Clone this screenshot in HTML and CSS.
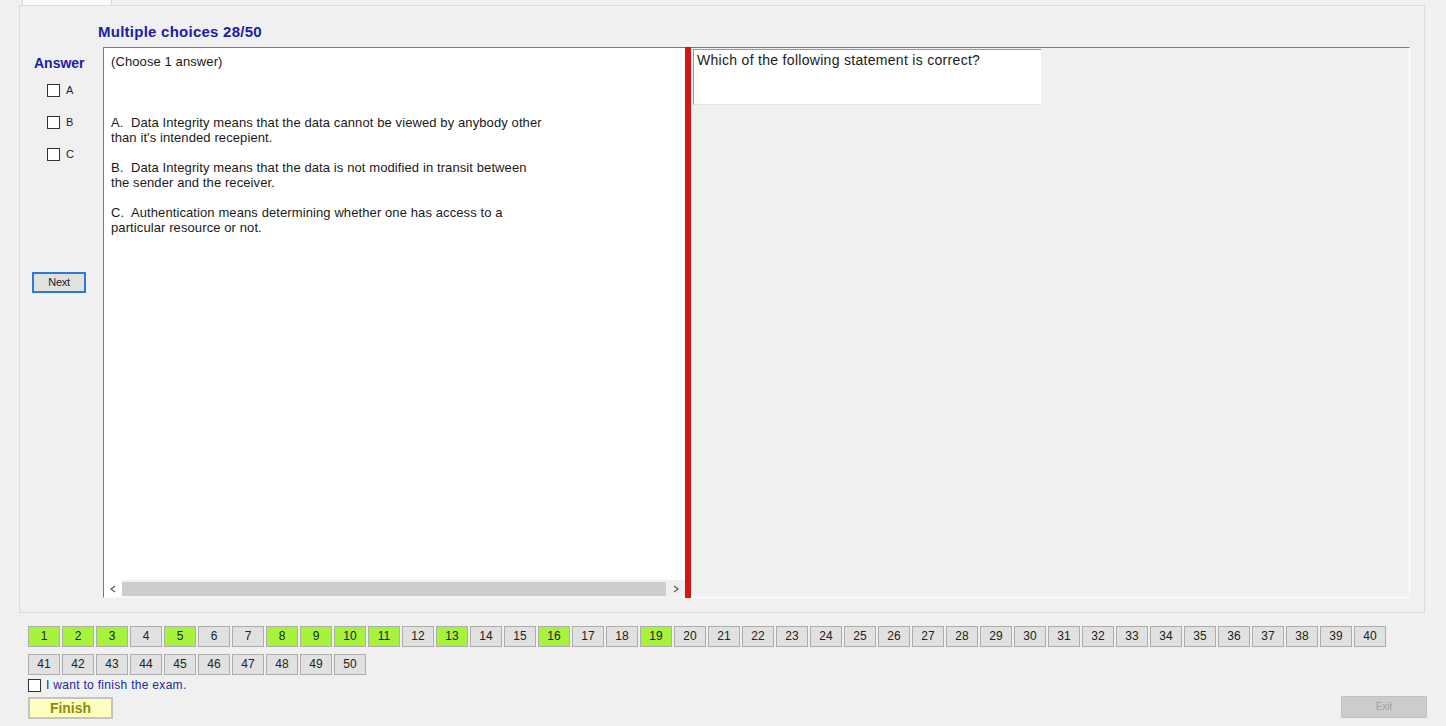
FILE: index.html
```html
<!DOCTYPE html>
<html>
<head>
<meta charset="utf-8">
<link rel="stylesheet" href="styles.css">
</head>
<body>
<div class="tabstrip"><div class="tab"></div></div>
<div class="tabpage">
  <div class="title">Multiple choices 28/50</div>
  <div class="main">
    <div class="answer">
      <div class="answer-label">Answer</div>
      <div class="opt"><span class="cb"></span><span>A</span></div>
      <div class="opt"><span class="cb"></span><span>B</span></div>
      <div class="opt"><span class="cb"></span><span>C</span></div>
      <div class="next">Next</div>
    </div>
    <div class="textbox">
      <div class="text">
        <p class="choose">(Choose 1 answer)</p>
        <p>A.&nbsp; Data Integrity means that the data cannot be viewed by anybody other<br>than it's intended recepient.</p>
        <p>B.&nbsp; Data Integrity means that the data is not modified in transit between<br>the sender and the receiver.</p>
        <p>C.&nbsp; Authentication means determining whether one has access to a<br>particular resource or not.</p>
      </div>
      <div class="hscroll">
        <span class="arrow"><svg width="8" height="8" viewBox="0 0 8 8"><polyline points="6,1 2,4 6,7" fill="none" stroke="#606060" stroke-width="1.3"/></svg></span>
        <span class="thumb"></span>
        <span class="arrow right"><svg width="8" height="8" viewBox="0 0 8 8"><polyline points="2,1 6,4 2,7" fill="none" stroke="#606060" stroke-width="1.3"/></svg></span>
      </div>
    </div>
    <div class="splitter"></div>
    <div class="rightpane">
      <div class="question">Which of the following statement is correct?</div>
    </div>
  </div>
</div>
<div class="nav">
  <span class="num done">1</span><span class="num done">2</span><span class="num done">3</span><span class="num">4</span><span class="num done">5</span><span class="num">6</span><span class="num">7</span><span class="num done">8</span><span class="num done">9</span><span class="num done">10</span>
  <span class="num done">11</span><span class="num">12</span><span class="num done">13</span><span class="num">14</span><span class="num">15</span><span class="num done">16</span><span class="num">17</span><span class="num">18</span><span class="num done">19</span><span class="num">20</span>
  <span class="num">21</span><span class="num">22</span><span class="num">23</span><span class="num">24</span><span class="num">25</span><span class="num">26</span><span class="num">27</span><span class="num">28</span><span class="num">29</span><span class="num">30</span>
  <span class="num">31</span><span class="num">32</span><span class="num">33</span><span class="num">34</span><span class="num">35</span><span class="num">36</span><span class="num">37</span><span class="num">38</span><span class="num">39</span><span class="num">40</span>
  <span class="num">41</span><span class="num">42</span><span class="num">43</span><span class="num">44</span><span class="num">45</span><span class="num">46</span><span class="num">47</span><span class="num">48</span><span class="num">49</span><span class="num">50</span>
</div>
<div class="finish-check"><span class="cb"></span><span>I want to finish the exam.</span></div>
<div class="bottom">
  <div class="finish">Finish</div>
  <div class="exit">Exit</div>
</div>
</body>
</html>
```

FILE: styles.css
```css
html, body {
  margin: 0;
  padding: 0;
}
body {
  width: 1446px;
  height: 726px;
  background: #f0f0f0;
  font-family: "Liberation Sans", Arial, sans-serif;
  font-size: 12px;
  color: #1a1a1a;
  overflow: hidden;
}
.tabstrip {
  height: 5px;
  display: flex;
}
.tab {
  margin-left: 22px;
  width: 88px;
  height: 5px;
  background: #fbfbfb;
  border-left: 1px solid #d9d9d9;
  border-right: 1px solid #d9d9d9;
}
.tabpage {
  margin-left: 19px;
  width: 1404px;
  height: 606px;
  border: 1px solid #dcdcdc;
  background: #f0f0f0;
  display: flex;
  flex-direction: column;
}
.title {
  height: 41px;
  box-sizing: border-box;
  padding: 17px 0 0 78px;
  font-size: 15px;
  line-height: 17px;
  font-weight: bold;
  letter-spacing: 0.25px;
  color: #1c1ca6;
}
.main {
  display: flex;
  height: 551px;
}
.answer {
  width: 83px;
  flex: none;
  display: flex;
  flex-direction: column;
}
.answer-label {
  margin: 8px 0 0 14px;
  font-size: 14px;
  line-height: 17px;
  font-weight: bold;
  color: #1c1ca6;
}
.opt {
  margin: 12px 0 0 27px;
  height: 20px;
  display: flex;
  align-items: flex-start;
  gap: 6px;
  font-size: 11px;
  line-height: 13px;
  color: #222;
}
.opt + .opt {
  margin-top: 12px;
}
.cb {
  width: 11px;
  height: 11px;
  border: 1px solid #333;
  background: #fff;
  flex: none;
}
.next {
  margin: 104px 0 0 12px;
  width: 50px;
  height: 17px;
  border: 2px solid #2a7bd4;
  background: #e1e1e1;
  font-size: 11px;
  line-height: 17px;
  text-align: center;
  color: #222;
  letter-spacing: -0.3px;
}
.textbox {
  width: 582px;
  flex: none;
  background: #fff;
  border-left: 1px solid #7a7a7a;
  border-top: 1px solid #7a7a7a;
  border-bottom: 1px solid #f7f7f7;
  display: flex;
  flex-direction: column;
  box-sizing: border-box;
}
.text {
  flex: 1;
  padding: 6px 0 0 7px;
  line-height: 15px;
  font-size: 13px;
  letter-spacing: 0.1px;
  color: #1a1a1a;
}
.text p {
  margin: 0 0 15px 0;
}
.text p.choose {
  margin-bottom: 46px;
}
.hscroll {
  height: 17px;
  display: flex;
  align-items: center;
  background: #f0f0f0;
}
.arrow {
  width: 18px;
  height: 17px;
  display: flex;
  align-items: center;
  justify-content: center;
  background: #fff;
}
.arrow.right {
  width: 19px;
  background: #f0f0f0;
}
.thumb {
  flex: 1;
  height: 14px;
  background: #cdcdcd;
}
.splitter {
  width: 6px;
  flex: none;
  background: #d21616;
}
.rightpane {
  width: 719px;
  flex: none;
  border-top: 1px solid #7a7a7a;
  border-right: 1px solid #ffffff;
  border-bottom: 1px solid #ffffff;
  box-sizing: border-box;
}
.question {
  margin: 1px 0 0 2px;
  width: 344px;
  height: 52px;
  padding: 2px 0 0 3px;
  background: #fff;
  border-left: 1px solid #9a9a9a;
  border-top: 1px solid #9a9a9a;
  border-bottom: 1px solid #e4e4e4;
  font-size: 14px;
  letter-spacing: 0.3px;
  line-height: 16px;
  color: #1a1a1a;
}
.nav {
  margin: 13px 0 0 28px;
  width: 1360px;
  display: flex;
  flex-wrap: wrap;
  column-gap: 2px;
  row-gap: 7px;
}
.num {
  width: 30px;
  height: 19px;
  border: 1px solid #adadad;
  background: #e1e1e1;
  text-align: center;
  font-size: 12px;
  line-height: 19px;
  color: #222;
}
.num.done {
  background: #a6f23c;
}
.finish-check {
  margin: 3px 0 0 28px;
  display: flex;
  align-items: center;
  gap: 5px;
  height: 14px;
  font-size: 12px;
  letter-spacing: 0.3px;
  color: #26269e;
}
.finish-check .cb {
  width: 11px;
  height: 11px;
}
.bottom {
  margin-top: 5px;
  padding: 0 19px 0 28px;
  display: flex;
  justify-content: space-between;
}
.finish {
  width: 81px;
  height: 18px;
  border: 2px solid #c4c4c4;
  background: #ffffc0;
  text-align: center;
  font-size: 14px;
  font-weight: bold;
  line-height: 18px;
  color: #8a8a10;
}
.exit {
  width: 84px;
  height: 20px;
  margin-top: -1px;
  border: 1px solid #c2c2c2;
  background: #cccccc;
  text-align: center;
  font-size: 10px;
  line-height: 20px;
  color: #a0a0a0;
}
```
